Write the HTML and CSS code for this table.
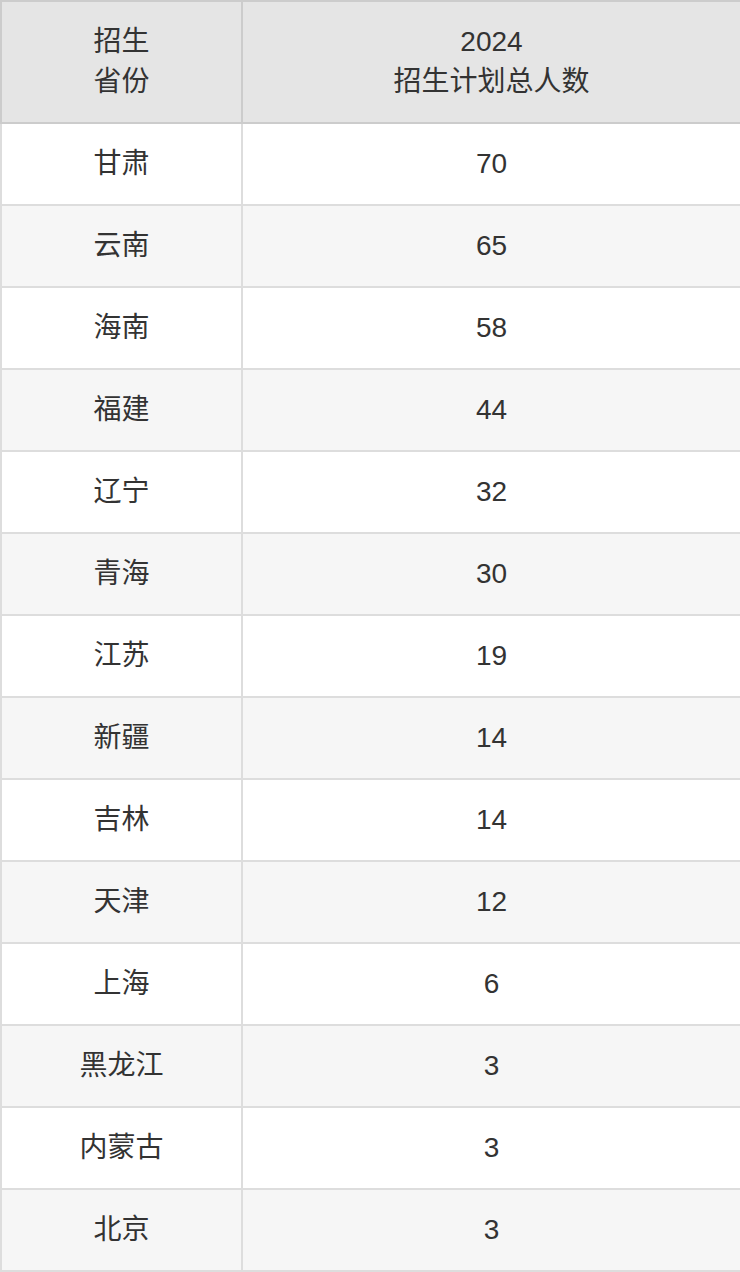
FILE: index.html
```html
<!DOCTYPE html>
<html lang="zh-CN">
<head>
<meta charset="utf-8">
<title>招生计划</title>
<link rel="stylesheet" href="styles.css">
</head>
<body>
<table class="plan">
  <colgroup>
    <col class="col-prov">
    <col class="col-num">
  </colgroup>
  <thead>
    <tr><th>招生<br>省份</th><th>2024<br>招生计划总人数</th></tr>
  </thead>
  <tbody>
    <tr><td>甘肃</td><td>70</td></tr>
    <tr><td>云南</td><td>65</td></tr>
    <tr><td>海南</td><td>58</td></tr>
    <tr><td>福建</td><td>44</td></tr>
    <tr><td>辽宁</td><td>32</td></tr>
    <tr><td>青海</td><td>30</td></tr>
    <tr><td>江苏</td><td>19</td></tr>
    <tr><td>新疆</td><td>14</td></tr>
    <tr><td>吉林</td><td>14</td></tr>
    <tr><td>天津</td><td>12</td></tr>
    <tr><td>上海</td><td>6</td></tr>
    <tr><td>黑龙江</td><td>3</td></tr>
    <tr><td>内蒙古</td><td>3</td></tr>
    <tr><td>北京</td><td>3</td></tr>
  </tbody>
</table>
</body>
</html>
```
FILE: styles.css
```css
html, body {
  margin: 0;
  padding: 0;
  background: #ffffff;
}
.plan {
  width: 740px;
  border-collapse: collapse;
  table-layout: fixed;
  font-family: "Liberation Sans", "Noto Sans CJK SC", sans-serif;
  font-size: 28px;
  line-height: 40px;
  color: #333333;
}
.col-prov { width: 241px; }
.col-num { width: 499px; }
.plan th {
  font-weight: normal;
  background: #e5e5e5;
  border: 2px solid #cccccc;
  padding: 20px 0;
  text-align: center;
  vertical-align: middle;
}
.plan td {
  border: 2px solid #dddddd;
  height: 40px;
  padding: 20px 0;
  text-align: center;
  vertical-align: middle;
}
.plan tbody tr:nth-child(even) td {
  background: #f6f6f6;
}
```
